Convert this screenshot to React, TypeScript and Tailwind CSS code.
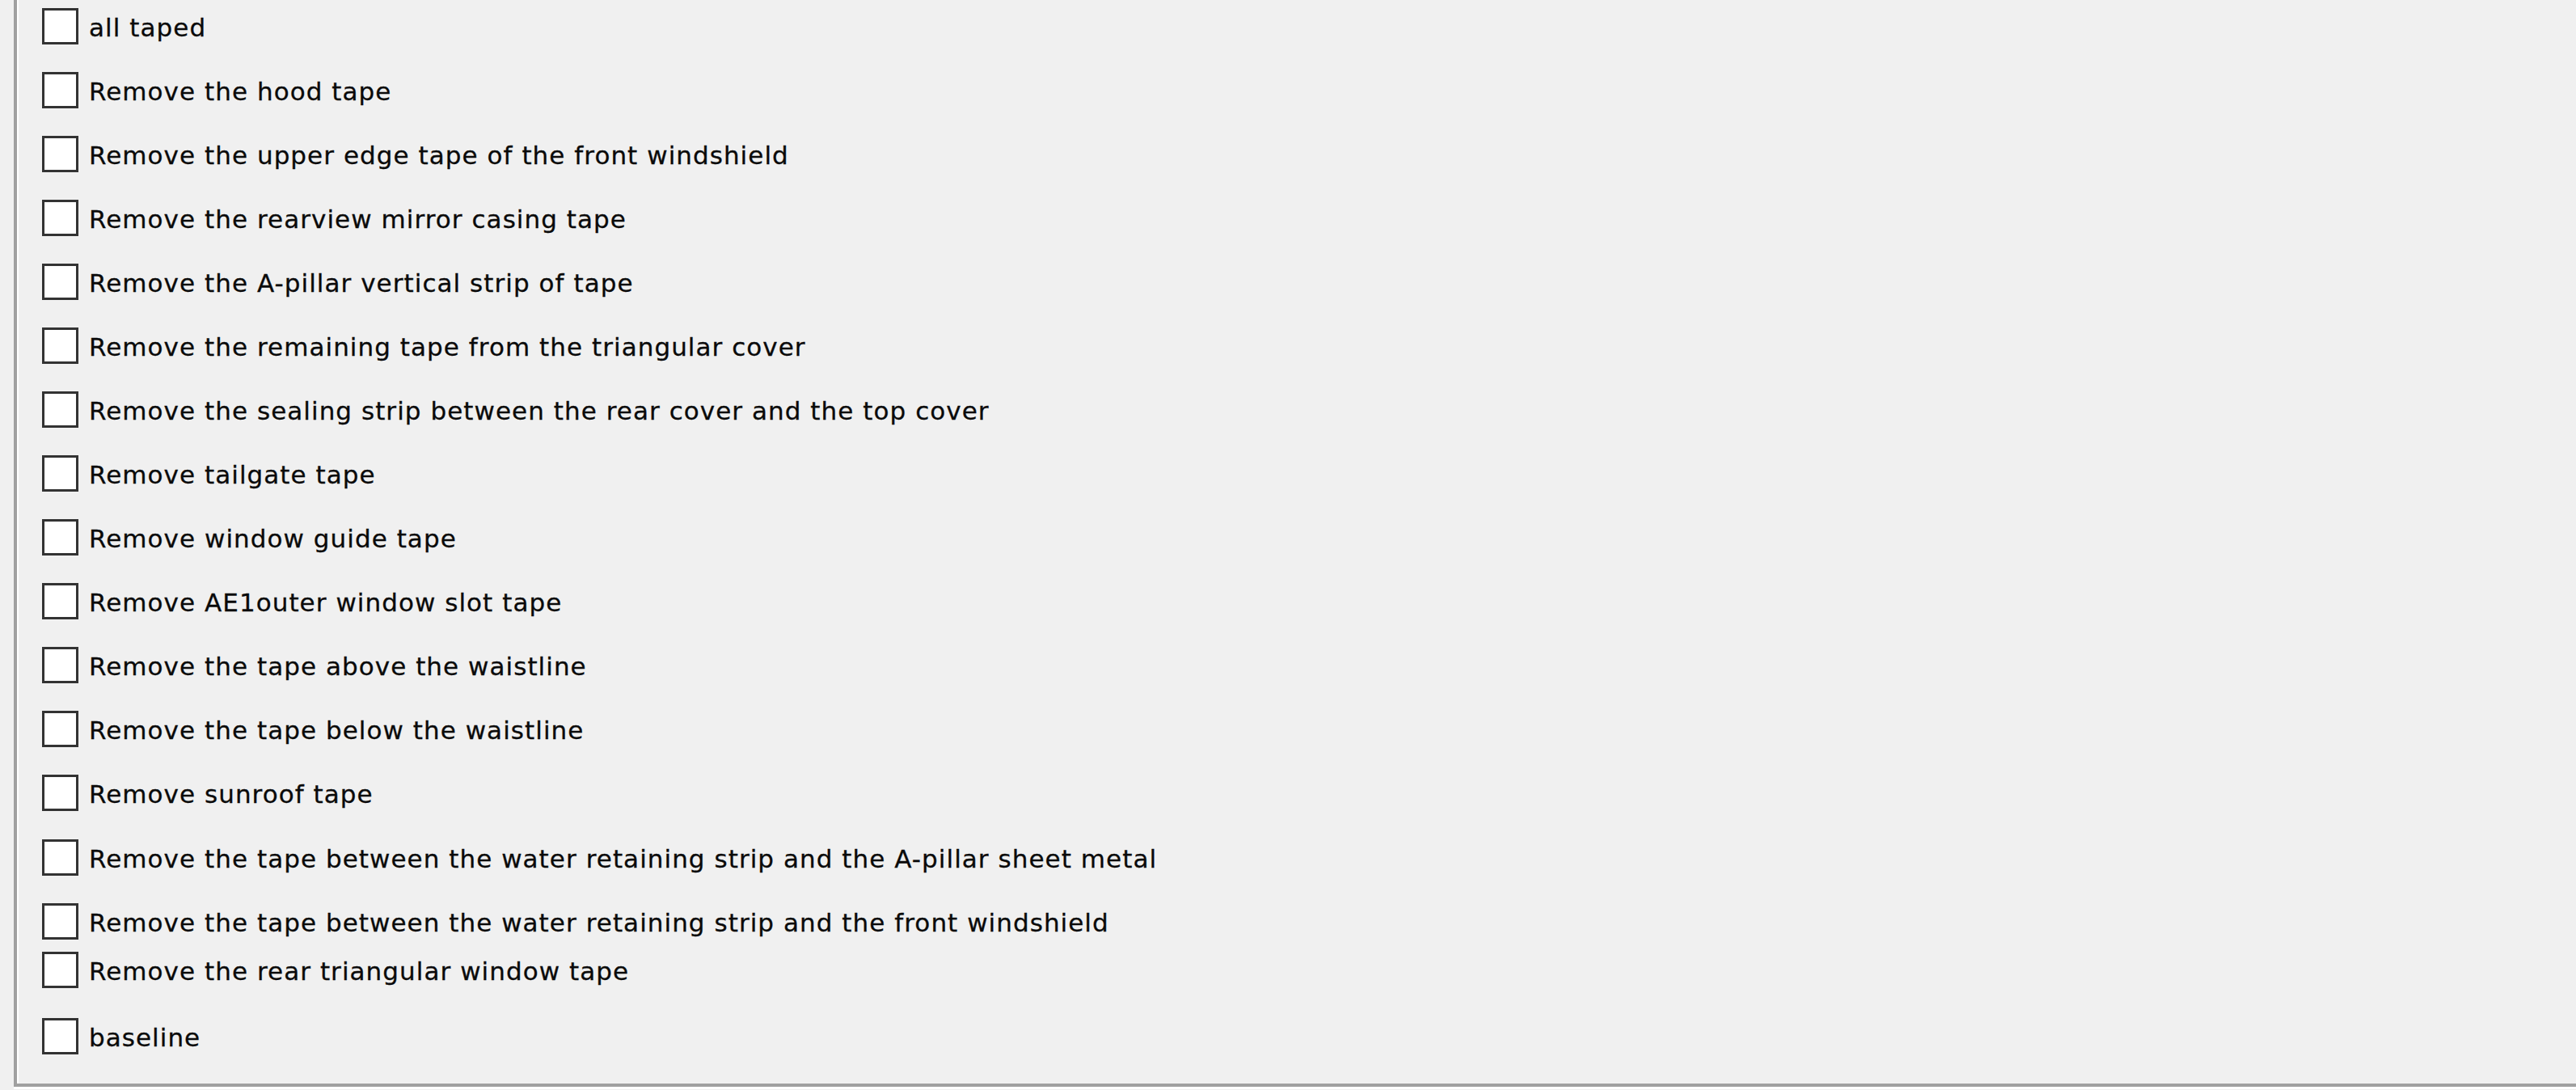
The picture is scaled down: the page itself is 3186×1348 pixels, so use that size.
import React from "react";

const items: { label: string; h: string }[] = [
  { label: "all taped", h: "h-[79.08px]" },
  { label: "Remove the hood tape", h: "h-[79.08px]" },
  { label: "Remove the upper edge tape of the front windshield", h: "h-[79.08px]" },
  { label: "Remove the rearview mirror casing tape", h: "h-[79.08px]" },
  { label: "Remove the A-pillar vertical strip of tape", h: "h-[79.08px]" },
  { label: "Remove the remaining tape from the triangular cover", h: "h-[79.08px]" },
  { label: "Remove the sealing strip between the rear cover and the top cover", h: "h-[79.08px]" },
  { label: "Remove tailgate tape", h: "h-[79.08px]" },
  { label: "Remove window guide tape", h: "h-[79.08px]" },
  { label: "Remove AE1outer window slot tape", h: "h-[79.08px]" },
  { label: "Remove the tape above the waistline", h: "h-[79.08px]" },
  { label: "Remove the tape below the waistline", h: "h-[79.08px]" },
  { label: "Remove sunroof tape", h: "h-[79.08px]" },
  { label: "Remove the tape between the water retaining strip and the A-pillar sheet metal", h: "h-[79.08px]" },
  { label: "Remove the tape between the water retaining strip and the front windshield", h: "h-[60px]" },
  { label: "Remove the rear triangular window tape", h: "h-[82px]" },
  { label: "baseline", h: "h-[60px]" },
];

export default function App() {
  return (
    <div className="w-[3186px] h-[1348px] bg-[#f0f0f0] overflow-hidden">
      <div className="ml-[17px] w-[3169px] h-[1347px] border-b-[3px] border-white">
        <div className="h-full border-l-[4px] border-b-[4px] border-[#a0a0a0]">
          <div className="h-full border-l-[2px] border-white pt-[9.5px] pl-[29px]">
            <div className="flex flex-col">
              {items.map((it, i) => (
                <div key={i} className={`flex items-start shrink-0 ${it.h}`}>
                  <div className="w-[45px] h-[45px] shrink-0 border-[3px] border-[#333333] bg-white" />
                  <span
                    className="ml-[13px] mt-[6px] leading-[36px] text-[31px] tracking-[1.05px] text-[#0a0a0a] whitespace-nowrap [-webkit-text-stroke:0.3px_#0a0a0a]"
                    style={{ fontFamily: '"DejaVu Sans", Tahoma, sans-serif' }}
                  >
                    {it.label}
                  </span>
                </div>
              ))}
            </div>
          </div>
        </div>
      </div>
    </div>
  );
}
